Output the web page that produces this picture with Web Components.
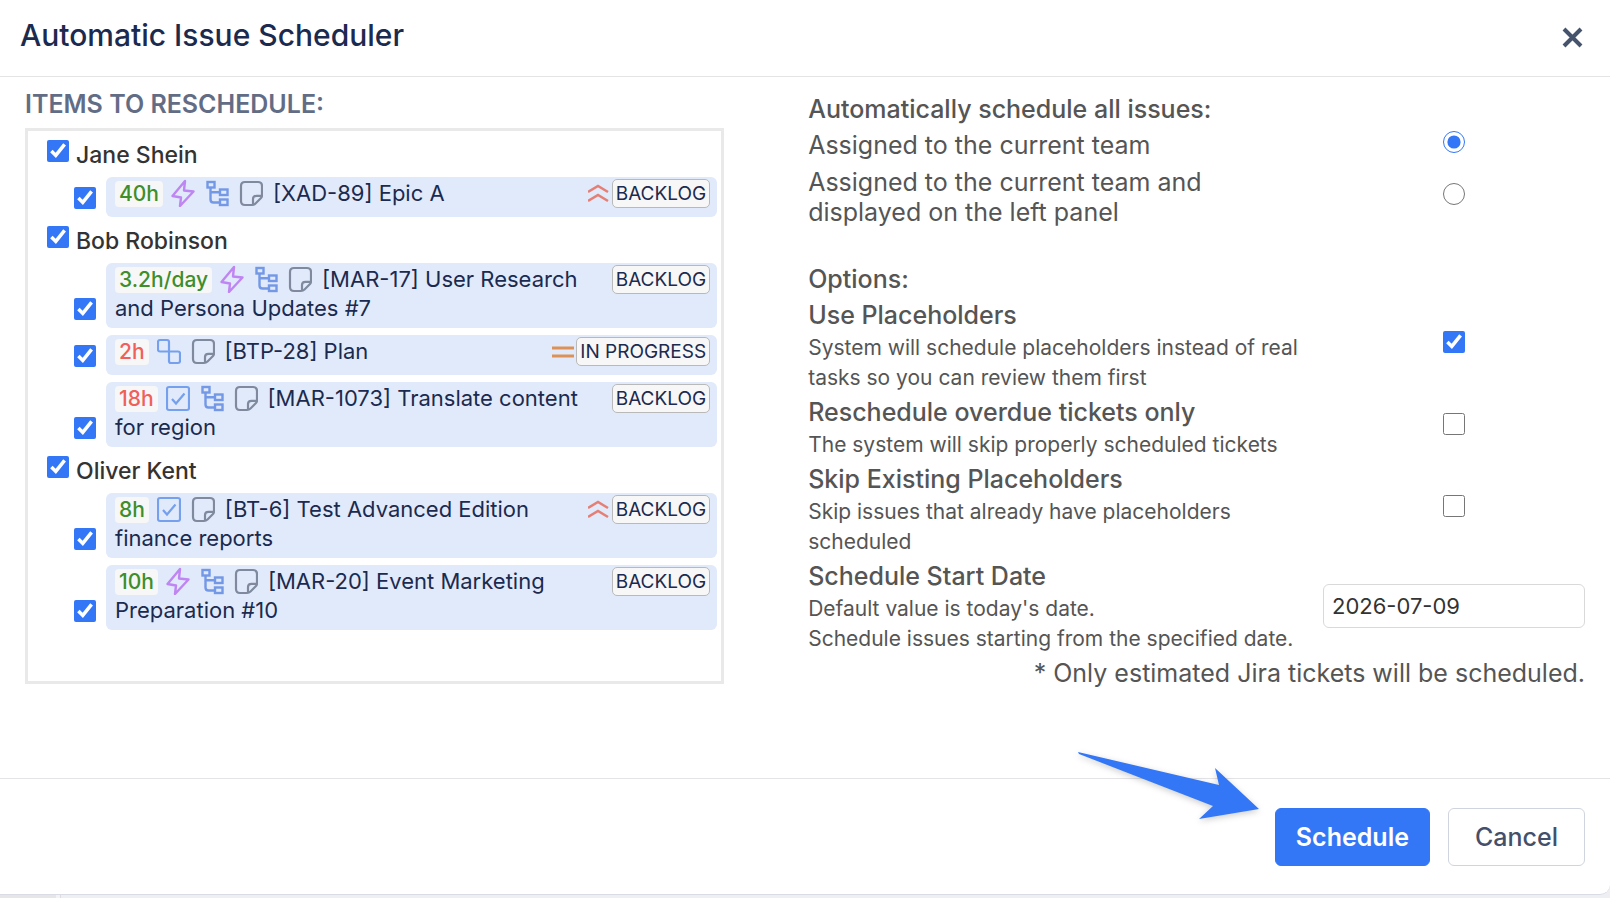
<!DOCTYPE html>
<html lang="en">
<head>
<meta charset="utf-8">
<title>Automatic Issue Scheduler</title>
<style>
  :root {
    --blue: #3377f6;
    --navy: #1b2a4e;
    --text: #555;
    --line: #e4e4e6;
  }

  body {
    margin: 0;
    background: #eeeff3;
    font-family: Inter, "Liberation Sans", sans-serif;
    font-size: 24px;
  }
</style>
</head>
<body>
<issue-scheduler></issue-scheduler>

<script>
const ICONS = {
  epic: `<path d="M14 2 L13 11.5 L22.5 12.5 L9 27 L10 18.5 L1.5 17 Z" stroke="#bf85f2" stroke-width="2.4" stroke-linejoin="round"/>`,
  tree: `<g stroke="#7398e6" stroke-width="2.4"><rect x="2.5" y="3" width="7" height="5.5"/><rect x="15" y="10.5" width="7.5" height="5.5"/><rect x="15" y="20.5" width="7.5" height="5.5"/><path d="M5.5 8 V20.5 Q5.5 23.5 8.5 23.5 H15 M5.5 13.3 H15"/></g>`,
  note: `<path d="M6 3 H19 Q23 3 23 7 V16.5 Q23 18 22 19 L16.5 24.5 Q15 26 13 26 H6 Q2 26 2 22 V7 Q2 3 6 3 Z M14 25.5 V20 Q14 16.8 17.5 16.8 H22.5" stroke="#7f8a9f" stroke-width="2.2" stroke-linejoin="round"/>`,
  subtask: `<path d="M3 3 H10 Q12 3 12 5 V14.5 H3 Q1 14.5 1 12.5 V5 Q1 3 3 3 Z M12 14.5 H21 Q23 14.5 23 16.5 V24 Q23 26 21 26 H14 Q12 26 12 24 Z" stroke="#74a0ee" stroke-width="2.2"/>`,
  task: `<rect x="1" y="3" width="22" height="23" rx="2" stroke="#74a0ee" stroke-width="2.2"/><path d="M6 15 L10 19.5 L18.5 9.5" stroke="#74a0ee" stroke-width="2.2"/>`,
  highest: `<path d="M0 12 L10 6 L20 12 M0 21 L10 15 L20 21" stroke="#e57f76" stroke-width="2.6"/>`,
  medium: `<path d="M0 10 H22 M0 18 H22" stroke="#dd9156" stroke-width="2.8"/>`,
};

class IssueIcon extends HTMLElement {
  constructor() {
    super();
    this.attachShadow({ mode: "open" });
    this.shadowRoot.innerHTML = `
      <style>
        :host {
          display: inline-block;
          width: 24px;
          height: 28px;
          vertical-align: middle;
        }
        svg {
          display: block;
        }
      </style>
      <svg width="24" height="28" viewBox="0 0 24 28" fill="none" aria-hidden="true">
        ${ICONS[this.getAttribute("name")] || ""}
      </svg>
    `;
  }
}
customElements.define("issue-icon", IssueIcon);

class IssueRow extends HTMLElement {
  constructor() {
    super();
    this.attachShadow({ mode: "open" });

    const icons = this.getAttribute("icons").split(" ");
    const priority = this.getAttribute("priority");

    this.shadowRoot.innerHTML = `
      <style>
        :host {
          display: flex;
          align-items: flex-end;
          gap: 10px;
        }

        input {
          flex: none;
          width: 22px;
          height: 22px;
          margin: 0 0 8px;
          accent-color: var(--blue);
        }

        .card {
          flex: 1;
          display: block;
          box-sizing: border-box;
          min-height: 40px;
          padding: 2px 7px 5px 9px;
          border-radius: 6px;
          background: #e1eafb;
          color: var(--navy);
          font-size: 22px;
          line-height: 29px;
        }

        .time {
          display: inline-block;
          margin-right: 3px;
          padding: 0 4px;
          border-radius: 4px;
          background: #f7f7f7;
          color: #3e8e2b;
          font-size: 21px;
          font-weight: 500;
          line-height: 26px;
        }

        .late {
          color: #f0605a;
        }

        .text issue-icon {
          margin: -4px 5px 0;
        }

        .text issue-icon:last-of-type {
          margin-right: 10px;
        }

        .status {
          float: right;
          display: flex;
          align-items: center;
          margin-left: 20px;
        }

        .badge {
          padding: 0 3px;
          border: 1px solid #b9b9b9;
          border-radius: 5px;
          background: #f7f7f7;
          font-size: 19px;
          line-height: 27px;
        }
      </style>

      <input type="checkbox" id="pick" checked />
      <label class="card" for="pick">
        <span class="status">
          ${priority ? `<issue-icon name="${priority}"></issue-icon>` : ""}
          <span class="badge">${this.getAttribute("status")}</span>
        </span>
        <span class="text"><span class="time ${this.hasAttribute("late") ? "late" : ""}">${this.getAttribute("time")}</span>${icons.map((name) => `<issue-icon name="${name}"></issue-icon>`).join("")}<slot></slot></span>
      </label>
    `;
  }
}
customElements.define("issue-row", IssueRow);

class AssigneeGroup extends HTMLElement {
  constructor() {
    super();
    this.attachShadow({ mode: "open" });
    this.shadowRoot.innerHTML = `
      <style>
        :host {
          display: block;
        }

        .person {
          display: flex;
          align-items: flex-start;
          gap: 7px;
          height: 46px;
          color: #333;
          font-weight: 500;
          line-height: 30px;
        }

        input {
          width: 22px;
          height: 22px;
          margin: 9px 0 0;
          accent-color: var(--blue);
        }

        label {
          padding-top: 9px;
          font-size: 23px;
        }

        .issues {
          display: flex;
          flex-direction: column;
          gap: 7px;
          padding-left: 27px;
        }
      </style>

      <div class="person">
        <input type="checkbox" id="all" checked />
        <label for="all">${this.getAttribute("name")}</label>
      </div>
      <div class="issues"><slot></slot></div>
    `;
  }
}
customElements.define("assignee-group", AssigneeGroup);

class SettingRow extends HTMLElement {
  constructor() {
    super();
    this.attachShadow({ mode: "open" });
    this.shadowRoot.innerHTML = `
      <style>
        :host {
          display: grid;
          grid-template-columns: minmax(0, 1fr) 262px;
          column-gap: 24px;
          align-items: center;
          padding-bottom: 1px;
        }

        .control {
          display: flex;
          justify-content: center;
        }
      </style>

      <div><slot></slot></div>
      <div class="control"><slot name="control"></slot></div>
    `;
  }
}
customElements.define("setting-row", SettingRow);

class IssueScheduler extends HTMLElement {
  constructor() {
    super();
    this.attachShadow({ mode: "open" });
    this.shadowRoot.innerHTML = `
      <style>
        :host {
          display: flex;
          flex-direction: column;
          box-sizing: border-box;
          min-height: 100vh;
          padding-bottom: 3px;
          background: linear-gradient(90deg, #e6e6e8 56px, #f3f3f5 56px 60px, #dcdde2 60px 61px, transparent 61px);
        }

        .dialog {
          flex: 1;
          display: flex;
          flex-direction: column;
          border-bottom: 1px solid #d9dce4;
          border-radius: 0 0 10px 0;
          background: #fff;
        }

        header {
          display: flex;
          align-items: center;
          justify-content: space-between;
          padding: 16px 26px 22px 20px;
          border-bottom: 1px solid var(--line);
        }

        h1 {
          margin: 0;
          color: var(--navy);
          font-size: 30px;
          font-weight: 500;
          line-height: 38px;
        }

        .close {
          display: flex;
          margin-top: 4px;
          padding: 0;
          border: none;
          background: none;
        }

        main {
          flex: 1;
          display: grid;
          grid-template-columns: 9fr 10fr;
          column-gap: 84px;
          align-items: start;
          padding: 13px 25px 24px;
        }

        h2 {
          margin: 0 0 10px;
          color: #626d85;
          font-size: 25px;
          font-weight: 600;
          line-height: 28px;
        }

        .list {
          padding: 0 4px 51px 19px;
          border: 3px solid #e9e9e9;
        }

        .settings {
          padding-top: 1px;
          color: var(--text);
          font-size: 25px;
          line-height: 30px;
        }

        h3 {
          margin: 0;
          font-size: 25px;
          font-weight: 500;
          line-height: 36px;
        }

        .options {
          margin-top: 30px;
        }

        .choice {
          padding: 3px 0 4px;
        }

        .name {
          display: block;
          font-weight: 500;
          line-height: 36px;
        }

        .hint {
          margin: 0;
          font-size: 21px;
          line-height: 30px;
        }

        input[type="checkbox"],
        input[type="radio"] {
          width: 22px;
          height: 22px;
          margin: 0 0 6px;
          accent-color: var(--blue);
        }

        .date {
          box-sizing: border-box;
          width: 100%;
          height: 44px;
          padding: 0 8px;
          border: 1px solid #d9d9d9;
          border-radius: 6px;
          color: #333;
          font: inherit;
          font-size: 22px;
        }

        .footnote {
          margin: 3px 0 0;
          text-align: right;
        }

        footer {
          display: flex;
          justify-content: flex-end;
          gap: 18px;
          padding: 29px 25px 28px;
          border-top: 1px solid var(--line);
        }

        footer button {
          box-sizing: border-box;
          height: 58px;
          padding: 0 20px;
          border: 1px solid var(--blue);
          border-radius: 6px;
          background: var(--blue);
          color: #fff;
          font: inherit;
          font-size: 25px;
          font-weight: 600;
        }

        footer .cancel {
          padding: 0 26px;
          border-color: #d0d4de;
          background: #fff;
          color: #44506a;
          font-weight: 500;
        }

        .primary {
          position: relative;
        }

        .arrow {
          position: absolute;
          right: 170px;
          bottom: 46px;
          filter: drop-shadow(0 2px 3px rgba(0, 0, 0, 0.2));
          pointer-events: none;
        }
      </style>

      <div class="dialog" role="dialog" aria-labelledby="title">
        <header>
          <h1 id="title">Automatic Issue Scheduler</h1>
          <button class="close" aria-label="Close">
            <svg width="24" height="24" viewBox="0 0 24 24" fill="none" stroke="#46536d" stroke-width="4">
              <path d="M4 4 L21 21 M21 4 L4 21" />
            </svg>
          </button>
        </header>

        <main>
          <section>
            <h2>ITEMS TO RESCHEDULE:</h2>
            <div class="list">
              <assignee-group name="Jane Shein">
                <issue-row time="40h" icons="epic tree note" priority="highest" status="BACKLOG">[XAD-89] Epic A</issue-row>
              </assignee-group>
              <assignee-group name="Bob Robinson">
                <issue-row time="3.2h/day" icons="epic tree note" status="BACKLOG">[MAR-17] User Research and Persona Updates #7</issue-row>
                <issue-row time="2h" late icons="subtask note" priority="medium" status="IN PROGRESS">[BTP-28] Plan</issue-row>
                <issue-row time="18h" late icons="task tree note" status="BACKLOG">[MAR-1073] Translate content for region</issue-row>
              </assignee-group>
              <assignee-group name="Oliver Kent">
                <issue-row time="8h" icons="task note" priority="highest" status="BACKLOG">[BT-6] Test Advanced Edition finance reports</issue-row>
                <issue-row time="10h" icons="epic tree note" status="BACKLOG">[MAR-20] Event Marketing Preparation #10</issue-row>
              </assignee-group>
            </div>
          </section>

          <section class="settings">
            <h3>Automatically schedule all issues:</h3>
            <setting-row class="choice">
              <label for="team">Assigned to the current team</label>
              <input slot="control" type="radio" name="scope" id="team" checked />
            </setting-row>
            <setting-row class="choice">
              <label for="panel">Assigned to the current team and displayed on the left panel</label>
              <input slot="control" type="radio" name="scope" id="panel" />
            </setting-row>

            <h3 class="options">Options:</h3>
            <setting-row>
              <label class="name" for="placeholders">Use Placeholders</label>
              <p class="hint">System will schedule placeholders instead of real tasks so you can review them first</p>
              <input slot="control" type="checkbox" id="placeholders" checked />
            </setting-row>
            <setting-row>
              <label class="name" for="overdue">Reschedule overdue tickets only</label>
              <p class="hint">The system will skip properly scheduled tickets</p>
              <input slot="control" type="checkbox" id="overdue" />
            </setting-row>
            <setting-row>
              <label class="name" for="skip">Skip Existing Placeholders</label>
              <p class="hint">Skip issues that already have placeholders scheduled</p>
              <input slot="control" type="checkbox" id="skip" />
            </setting-row>
            <setting-row>
              <label class="name" for="start">Schedule Start Date</label>
              <p class="hint">Default value is today's date.<br />Schedule issues starting from the specified date.</p>
              <input slot="control" class="date" type="text" id="start" value="2026-07-09" />
            </setting-row>
            <p class="footnote">* Only estimated Jira tickets will be scheduled.</p>
          </section>
        </main>

        <footer>
          <div class="primary">
            <svg class="arrow" width="182" height="68" viewBox="0 0 182 68" aria-hidden="true">
              <path d="M0 0 L141 33 L137 16 L181 57 L121 67 L135 54 L1 2 Z" fill="#3377f6" />
            </svg>
            <button>Schedule</button>
          </div>
          <button class="cancel">Cancel</button>
        </footer>
      </div>
    `;
  }
}
customElements.define("issue-scheduler", IssueScheduler);
</script>
</body>
</html>
